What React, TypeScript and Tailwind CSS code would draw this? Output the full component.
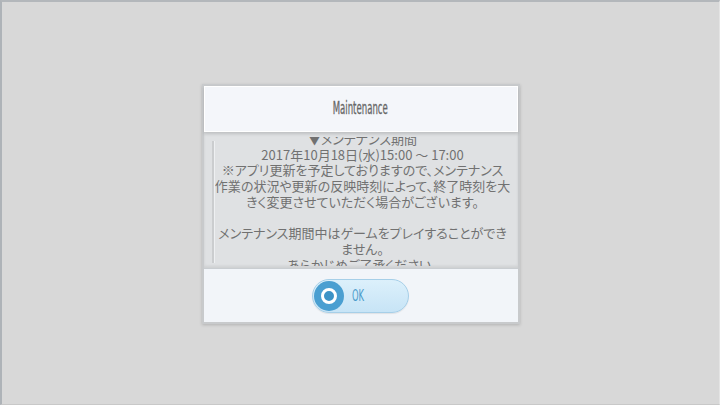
import React from "react";

const jp = "font-['Noto_Sans_CJK_JP',sans-serif] [font-feature-settings:'palt']";

export default function App() {
  const lines = [
    "▼メンテナンス期間",
    "2017年10月18日(水)15:00 ～ 17:00",
    "※アプリ更新を予定しておりますので、メンテナンス",
    "作業の状況や更新の反映時刻によって、終了時刻を大",
    "きく変更させていただく場合がございます。",
    "",
    "メンテナンス期間中はゲームをプレイすることができ",
    "ません。",
    "あらかじめご了承ください。",
  ];
  return (
    <div className="w-[720px] h-[405px] bg-[#d8d8d8] border-t-2 border-l-2 border-r border-b border-t-[#b3b7bb] border-l-[#aeb3b8] border-r-[#e4e4e4] border-b-[#c8c8c8] flex items-center justify-center overflow-hidden">
      <div className="w-[318px] bg-[#c8cacc] p-[2px] flex flex-col shadow-[0_1px_3px_rgba(0,0,0,0.18)] mt-[2px]">
        <div className="h-[46px] bg-[#f4f6fa] flex items-center justify-center border border-white relative z-10 shadow-[0_2px_3px_rgba(0,0,0,0.15)]">
          <span className="inline-block font-['DejaVu_Sans_Condensed',sans-serif] text-[17px] text-[#666666] scale-x-[0.56] [-webkit-text-stroke:0.3px_#666666]">
            Maintenance
          </span>
        </div>
        <div className="h-[136px] bg-[#dfe1e3] relative pt-[5px] pb-[2px] shadow-[inset_0_-2px_3px_rgba(0,0,0,0.08)]">
          <div className="absolute left-[8px] top-[9px] bottom-[5px] w-[3px] bg-[#cbcdcf] border-r border-[#eef0f2]" />
          <div className="h-[129px] overflow-hidden">
            <div className={`${jp} text-[13px] leading-[15.7px] text-[#717171] text-center mt-[-6px] ml-[4px]`}>
              {lines.map((l, i) => (
                <div key={i} className="whitespace-nowrap h-[15.7px]">
                  {l}
                </div>
              ))}
            </div>
          </div>
        </div>
        <div className="h-[54px] bg-[#f2f5f9] border-t border-[#c9cdd1] flex items-center justify-center">
          <div className="w-[97px] h-[34px] rounded-full border border-[#a6cfe8] bg-gradient-to-b from-[#dcf0fb] to-[#c7e4f6] flex items-center p-[1px] shadow-[0_1px_1px_rgba(0,0,0,0.08)]">
            <div className="w-[30px] h-[30px] rounded-full bg-[#4a9fd1] flex items-center justify-center">
              <div className="w-[16px] h-[16px] rounded-full border-[3px] border-white bg-[#3d93c6]" />
            </div>
            <span className="inline-block ml-[8px] font-['DejaVu_Sans_Condensed',sans-serif] text-[16px] text-[#4a9bcb] scale-x-[0.58] origin-left">
              OK
            </span>
          </div>
        </div>
      </div>
    </div>
  );
}
